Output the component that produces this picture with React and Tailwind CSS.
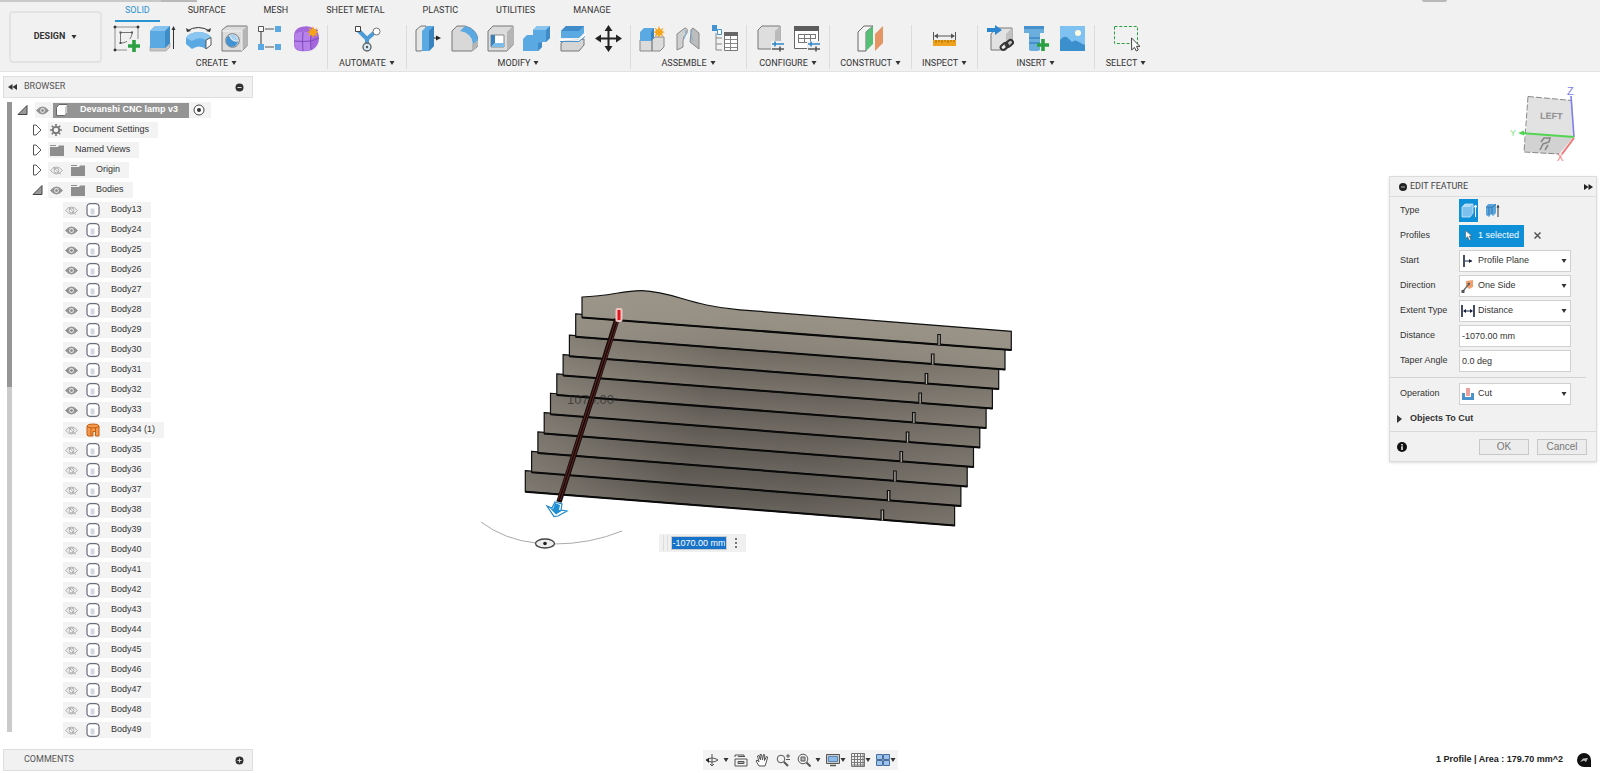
import { useState } from "react";

const tabs = ["SOLID", "SURFACE", "MESH", "SHEET METAL", "PLASTIC", "UTILITIES", "MANAGE"];

const Svg = ({ children, size = "h-[27px] w-[27px]" }) => (
  <svg viewBox="0 0 27 27" className={`${size} shrink-0`} fill="none">
    {children}
  </svg>
);

const Star = ({ x, y }) => (
  <g transform={`translate(${x} ${y})`} fill="#f5a31a">
    <path d="M0-6 1.4-2.2 4.4-4.4 3-1 6 0 3 1.2 4.4 4.4 1.2 3 0 6-1.2 3-4.4 4.4-3 1.2-6 0-3-1-4.4-4.4-1.4-2.2Z" />
  </g>
);

const Plus = ({ x, y }) => (
  <path d={`M${x} ${y - 6}v12M${x - 6} ${y}h12`} stroke="#2ba043" strokeWidth="3.6" />
);

const SketchIcon = () => (
  <Svg>
    <path d="M2 2h23v23H2Z" stroke="#777" strokeWidth=".8" />
    <path d="M1 1h2v2H1zM24 1h2v2h-2zM1 24h2v2H1z" fill="#333" stroke="#333" strokeWidth=".6" />
    <path d="M7.500 7.500H19C19 13 15 18 7.500 18Z" stroke="#666" strokeWidth=".9" />
    <path d="M6.500 6.500h2v2h-2zM18 6.500h2v2h-2zM6.500 17h2v2h-2z" fill="#555" />
    <path d="M14 14h13v13H14z" fill="#f0f0f0" />
    <Plus x={21} y={21} />
  </Svg>
);

const ExtrudeIcon = () => (
  <Svg>
    <path d="M1 21 5 18h16v4l-4 4H1z" fill="#c5c5c5" stroke="#999" strokeWidth=".6" />
    <path d="M1 6 6 1h15v17l-5 5H1Z" fill="#5ba9e2" />
    <path d="M1 6 6 1h15l-5 5Z" fill="#86c3ee" />
    <path d="M16 6 21 1v17l-5 5Z" fill="#3f8cc9" />
    <path d="M24.500 24V3" stroke="#333" />
    <path d="m22.500 5 2-4 2 4z" fill="#333" />
  </Svg>
);

const RevolveIcon = () => (
  <Svg>
    <path d="M2 6Q13-1 25 6" stroke="#333" />
    <path d="m1 3 1 4 4-1zM26 3l-1 4-4-1z" fill="#333" />
    <path d="M1 13Q3 8 13 7q9 0 13 5v8l-5 4q-7-5-14 0l-6-5Z" fill="#5ba9e2" />
    <path d="M1 13Q3 8 13 7q9 0 13 5l-5 3q-7-4-14 1Z" fill="#8ac6f0" />
    <path d="m21 15 5-2.500V20l-5 4Z" fill="#fff" stroke="#555" />
  </Svg>
);

const HoleIcon = () => (
  <Svg>
    <path d="M1 5 6 1h20v20l-5 5H1Z" fill="#dcdcdc" stroke="#777" />
    <path d="M21 6 26 1v20l-5 5Z" fill="#b5b5b5" />
    <path d="M1 6h20v20" stroke="#f3f3f3" />
    <circle cx="11.500" cy="15.500" r="6.800" fill="#e9e9e9" stroke="#777" />
    <path d="M8 10.500a6 6 0 1 0 9 6q-7 1-9-6Z" fill="#4393d3" />
    <path d="M9 10q2 6 8 5.500a6 6 0 0 0-8-5.500Z" fill="#a5d2f2" />
  </Svg>
);

const PatternIcon = () => (
  <Svg>
    <path d="M4 7v12M8 4h9M8 22h9" stroke="#555" strokeWidth="1.200" />
    <path d="M1.500 1.500h5v5h-5z" fill="#fff" stroke="#555" />
    <path d="M18 1h6v6h-6zM1 19h6v6H1zM18 19h6v6h-6z" fill="#5ba9e2" />
  </Svg>
);

const FormIcon = () => (
  <Svg>
    <path d="M1 11Q1 4 8 2q7-2 12 1 6 3 6 10 0 8-7 12-6 2-12 1-6-1-6-7Z" fill="#a468dc" />
    <path d="M2 9Q8 5 18 8q-1 9 0 17-10 2-15-2Q0 18 2 9Z" fill="#b681ea" />
    <path d="M10 7q-1 10 0 19M1 16q9 1 17 0l8-3M18 8l7-3M18 8q-1 9 0 17" stroke="#7b42b8" strokeWidth=".9" />
    <Star x={20} y={7} />
  </Svg>
);

const AutomateIcon = () => (
  <Svg>
    <path d="m4 5 9 9 8-7M13 13v8" stroke="#4c9bd6" strokeWidth="4" />
    <path d="M1.500 1.500h5v5h-5z" fill="#fff" stroke="#444" />
    <circle cx="22.500" cy="6.500" r="3.500" fill="#fff" stroke="#777" />
    <circle cx="13" cy="22" r="4" fill="#d5e8f6" stroke="#666" strokeWidth="1.400" />
    <circle cx="13" cy="22" r="1.200" fill="#555" />
  </Svg>
);

const PressPullIcon = () => (
  <Svg>
    <path d="M1 5 6 1h5v21l-5 4H1Z" fill="#e6e6e6" stroke="#777" />
    <path d="M7 6 12 1h7v20l-5 5H7Z" fill="#5ba9e2" />
    <path d="m14 6 5-5v20l-5 5Z" fill="#3782bf" />
    <path d="M19 13h4" stroke="#222" />
    <path d="m21 10.500 5 2.500-5 2.500z" fill="#222" />
  </Svg>
);

const FilletIcon = () => (
  <Svg>
    <path d="M1 6 6 1h8q12 3 13 14v6l-6 5H1Z" fill="#d8d8d8" stroke="#777" />
    <path d="m21 19 6-4v6l-6 5Z" fill="#b5b5b5" />
    <path d="m9 6 5-5q12 3 13 14l-5 4Q21 8 9 6Z" fill="#5ba9e2" />
  </Svg>
);

const ShellIcon = () => (
  <Svg>
    <path d="M1 6 6 1h20v19l-6 6H1Z" fill="#dcdcdc" stroke="#777" />
    <path d="m20 7 6-6v19l-6 6Z" fill="#b5b5b5" />
    <path d="M4 10h13v12H4Z" fill="#fff" stroke="#888" />
    <path d="M4 10v12l4-4v-8Z" fill="#3782bf" />
    <path d="m4 22 4-4h9v4Z" fill="#7bbdea" />
  </Svg>
);

const CombineIcon = () => (
  <Svg>
    <path d="m10 5 4-4h13v12l-4 4h-4v5l-4 4H0V14l4-4h6Z" fill="#5ba9e2" />
    <path d="m10 5 4-4h13l-4 4Z" fill="#89c5ef" />
    <path d="m23 5 4-4v12l-4 4ZM15 18l4-1v5l-4 4Z" fill="#3f8cc9" />
  </Svg>
);

const SplitIcon = () => (
  <Svg>
    <path d="m2 18 3-2 20-2v6l-5 6H2Z" fill="#d5d5d5" stroke="#777" />
    <path d="M2 6 7 1h18v7l-5 5H2Z" fill="#5ba9e2" />
    <path d="m2 6 5-5h18l-5 5Z" fill="#3f8cc9" />
    <path d="M0 15h20l7-6" stroke="#fff" strokeWidth="1.600" />
    <path d="M1 16.500h19l6-5" stroke="#4393d3" />
  </Svg>
);

const MoveIcon = () => (
  <Svg>
    <path d="M13.500 4v19M4 13.500h19" stroke="#222" strokeWidth="2" />
    <path d="m13.500 0 4 6h-8zM13.500 27l4-6h-8zM0 13.500l6-4v8zM27 13.500l-6-4v8z" fill="#222" />
  </Svg>
);

const NewComponentIcon = () => (
  <Svg>
    <path d="M1 15h12v11H1zM13 15l3-3h9v10l-4 4h-8z" fill="#dcdcdc" stroke="#888" />
    <path d="M1 7 5 3h10v9l-3 4H1Z" fill="#5ba9e2" />
    <path d="m12 7 3-4v9l-3 4Z" fill="#3782bf" />
    <Star x={20} y={7} />
  </Svg>
);

const JointIcon = () => (
  <Svg>
    <path d="M2 9 10 3q3 0 2 5-4 3-4 8v6l-6 3Z" fill="#d0d0d0" stroke="#888" />
    <path d="M24 8 18 3q-3 1-2 5l-1 9 9 7Z" fill="#bdbdbd" stroke="#888" />
    <path d="m10 5 1 4-2 5M17 5l-1 5 2 6" stroke="#7fb2d9" />
  </Svg>
);

const BomIcon = () => (
  <Svg>
    <path d="M5 8v17M5 13h6M5 19h6M5 25h6" stroke="#888" />
    <path d="M1 0h5v6H1z" fill="#4393d3" />
    <path d="M6.500 4.500h4v5h-4z" fill="#fff" stroke="#4393d3" />
    <path d="M13.500 7.500h13v18h-13z" fill="#fff" stroke="#777" />
    <path d="M13 7h14v4H13z" fill="#666" />
    <path d="M14 14.500h12M14 18.500h12M14 22.500h12M19.500 11v14" stroke="#888" />
  </Svg>
);

const Sliders = () => (
  <g>
    <path d="M14 16h13v11H14z" fill="#f0f0f0" />
    <path d="M15 19h12M18 16.500v5" stroke="#2f86c9" strokeWidth="1.600" />
    <path d="M15 24h12M23 21.500v5" stroke="#555" strokeWidth="1.600" />
  </g>
);

const ConfigureIcon = () => (
  <Svg>
    <path d="M1 5 5 1h18v18l-5 5H1Z" fill="#dedede" stroke="#777" />
    <path d="m18 6 5-5v18l-5 5Z" fill="#bbb" />
    <Sliders />
  </Svg>
);

const ConfigTableIcon = () => (
  <Svg>
    <path d="M1.500 2.500h24v21h-24z" fill="#fff" stroke="#666" />
    <path d="M1 1h25v5H1z" fill="#5c5c5c" />
    <path d="M5 9.500h17M5 13.500h17M5 17.500h12M5.500 9v9M11.500 9v9M17.500 9v9M22.500 9v5" stroke="#777" />
    <Sliders />
  </Svg>
);

const PlaneIcon = () => (
  <Svg>
    <path d="M1 7 7 1h9L9 7v19H1Z" fill="#f4f4f4" stroke="#666" />
    <path d="m9 7 7-6v18l-7 7Z" fill="#56be76" />
    <path d="m18 9 8-8v17l-8 8Z" fill="#e59564" />
  </Svg>
);

const MeasureIcon = () => (
  <Svg>
    <path d="M2.500 7v8M24.500 7v8M4 11h19" stroke="#555" />
    <path d="m3 11 4-2.500v5zM24 11l-4-2.500v5z" fill="#555" />
    <path d="M2 15h23v6H2z" fill="#f0a21c" />
    <path d="M5 15v3M8 15v2M11 15v3M14 15v2M17 15v3M20 15v2M23 15v2" stroke="#8a5a00" strokeWidth=".8" />
  </Svg>
);

const InsertLinkIcon = () => (
  <Svg>
    <path d="M4 9 9 3h16v16l-6 6H4Z" fill="#e2e2e2" stroke="#777" />
    <path d="m19 9 6-6v16l-6 6Z" fill="#c0c0c0" />
    <path d="M0 3h8V0l7 5-7 5V7H0Z" fill="#2b86d1" />
    <g stroke="#333" strokeWidth="2">
      <rect x="13" y="19" width="8" height="5" rx="2.500" transform="rotate(-40 17 21)" fill="#eee" />
      <rect x="18" y="16" width="8" height="5" rx="2.500" transform="rotate(-40 22 18)" />
    </g>
  </Svg>
);

const BoltIcon = () => (
  <Svg>
    <path d="M1 1h20v7h-4v17l-2 1H8l-2-1V8H1Z" fill="#6aaede" />
    <path d="M1 1h20v3H1zM6 12h11v2H6zM6 17h11v2H6z" fill="#4690cb" />
    <Plus x={20} y={20} />
  </Svg>
);

const ImageIcon = () => (
  <Svg>
    <path d="M1 1h25v25H1z" fill="#7fc2f2" />
    <path d="M1 15q5-6 9-1l3 3q3-3 7 0 3 2 6 3v6H1Z" fill="#3b8fcd" />
    <circle cx="19" cy="8" r="3" fill="#fffbe0" />
  </Svg>
);

const SelectIcon = () => (
  <Svg>
    <path d="M1.500 1.500h23v17h-23z" stroke="#2ba043" strokeDasharray="3 1.800" />
    <path d="m18.500 13 .2 12 2.800-2.600 1.800 3.600 2-1-1.800-3.600h3.500Z" fill="#fff" stroke="#444" />
  </Svg>
);

const groups = [
  { label: "CREATE", width: "w-[222px]", icons: [SketchIcon, ExtrudeIcon, RevolveIcon, HoleIcon, PatternIcon, FormIcon] },
  { label: "AUTOMATE", width: "w-[79px]", icons: [AutomateIcon] },
  { label: "MODIFY", width: "w-[224px]", icons: [PressPullIcon, FilletIcon, ShellIcon, CombineIcon, SplitIcon, MoveIcon] },
  { label: "ASSEMBLE", width: "w-[116px]", icons: [NewComponentIcon, JointIcon, BomIcon] },
  { label: "CONFIGURE", width: "w-[83px]", icons: [ConfigureIcon, ConfigTableIcon] },
  { label: "CONSTRUCT", width: "w-[82px]", icons: [PlaneIcon] },
  { label: "INSPECT", width: "w-[66px]", icons: [MeasureIcon] },
  { label: "INSERT", width: "w-[117px]", icons: [InsertLinkIcon, BoltIcon, ImageIcon] },
  { label: "SELECT", width: "w-[62px]", icons: [SelectIcon] },
];

const Caret = () => (
  <svg viewBox="0 0 6 4" className="h-1 w-[6px] shrink-0" fill="#333">
    <path d="M.5 0h5L3 4z" />
  </svg>
);

const Toolbar = () => {
  const [active, setActive] = useState("SOLID");

  return (
    <header className="flex h-[72px] shrink-0 flex-col border-b border-[#e2e2e2] bg-[#f1f1f1] font-['Roboto',sans-serif] text-[9px] text-[#333]">
      <div className="flex h-[2px] justify-between">
        <div className="flex w-[197px] bg-[#c9c9c9]">
          <span className="ml-auto w-9 bg-[#b9b9b9]" />
        </div>
        <span className="mr-[153px] w-[25px] rounded-b bg-[#b9b9b9]" />
      </div>
      <div className="flex flex-1">
        <button className="mt-[9px] ml-[9px] flex h-[52px] w-[93px] shrink-0 items-center justify-center gap-[6px] rounded border-2 border-[#e3e3e3] font-bold">
          DESIGN <Caret />
        </button>
        <div className="flex min-w-0 flex-1 flex-col">
          <nav className="ml-[13px] flex h-5 gap-[18px]">
            {tabs.map((tab) => (
              <button
                key={tab}
                onClick={() => setActive(tab)}
                className={`shrink-0 border-b-2 px-[10px] whitespace-nowrap ${tab === active ? "border-[#2a93d1] text-[#2a93d1]" : "border-transparent"}`}
              >
                {tab}
              </button>
            ))}
          </nav>
          <div className="ml-1 flex divide-x divide-[#dcdcdc] pt-[3px]">
            {groups.map((group) => (
              <div key={group.label} className={`flex h-11 shrink-0 flex-col items-center justify-between ${group.width}`}>
                <div className="flex gap-[9px]">
                  {group.icons.map((Icon, i) => (
                    <button key={i} aria-label={`${group.label} tool ${i + 1}`}>
                      <Icon />
                    </button>
                  ))}
                </div>
                <button className="flex items-center gap-[3px] leading-3">
                  {group.label} <Caret />
                </button>
              </div>
            ))}
          </div>
        </div>
      </div>
    </header>
  );
};

const Eye = ({ on }) => (
  <svg viewBox="0 0 13 9" className="h-[9px] w-[13px]" fill="none">
    {on ? (
      <>
        <path d="M.5 4.500Q6.500-2.500 12.500 4.500 6.500 11.500.5 4.500Z" fill="#929292" stroke="#929292" />
        <circle cx="6.500" cy="4.500" r="2.400" fill="#e5e5e5" />
        <circle cx="6.500" cy="4.500" r="1.300" fill="#808080" />
      </>
    ) : (
      <>
        <path d="M.5 4.500Q6.500-2.500 12.500 4.500 6.500 11.500.5 4.500Z" stroke="#b0b0b0" />
        <circle cx="6.500" cy="4.500" r="2.400" stroke="#b0b0b0" />
        <path d="m3 1 8 7.500" stroke="#b0b0b0" />
      </>
    )}
  </svg>
);

const BodyIcon = () => (
  <svg viewBox="0 0 14 14" className="h-[14px] w-[14px]" fill="none">
    <path d="M1 3.500Q1 .7 4 .7h6q3 0 3 2.800V11q0 2.300-3 2.300H4Q1 13.300 1 11Z" fill="#fff" stroke="#4a4f60" />
    <path d="M4.500 5.500h4v6h-4z" fill="#d3d7e2" />
  </svg>
);

const OrangeBodyIcon = () => (
  <svg viewBox="0 0 14 14" className="h-[14px] w-[14px]" fill="none">
    <path d="M1 3q0-2 6-2t6 2v10H9.500V8.500H7V13H2L1 12Z" fill="#f39a4e" stroke="#c65f12" />
    <path d="M1 4q6 2 12 0M5 5v8M9.500 5v4" stroke="#c65f12" />
  </svg>
);

const Folder = () => (
  <svg viewBox="0 0 14 11" className="h-[11px] w-[14px]" fill="#8e8e8e">
    <path d="M0 2h8l1-1.500h5V11H0z" />
    <path d="M0 0h6v1H0z" />
  </svg>
);

const Gear = () => (
  <svg viewBox="0 0 12 12" className="h-3 w-3" fill="none" stroke="#777">
    <circle cx="6" cy="6" r="3.200" strokeWidth="1.800" />
    <path d="M6 0v2M6 10v2M0 6h2M10 6h2M1.800 1.800l1.400 1.400M8.800 8.800l1.400 1.400M1.800 10.200l1.400-1.400M8.800 3.200l1.400-1.400" strokeWidth="1.600" />
  </svg>
);

const Twisty = ({ open }) => (
  <svg viewBox="0 0 11 12" className="h-3 w-[11px] shrink-0">
    {open ? <path d="M1 10.500h9v-9z" fill="#999" stroke="#444" /> : <path d="M1.500 1v10H4l5-5-5-5Z" fill="#fff" stroke="#555" />}
  </svg>
);

const bodies = [13, ...Array.from({ length: 26 }, (_, i) => i + 24)].map((n) => ({
  name: n === 34 ? "Body34 (1)" : `Body${n}`,
  on: n >= 24 && n <= 33,
  orange: n === 34,
}));

const folders = [
  { name: "Document Settings", icon: Gear },
  { name: "Named Views", icon: Folder },
  { name: "Origin", icon: Folder, eye: true, on: false },
  { name: "Bodies", icon: Folder, eye: true, on: true, open: true },
];

const PanelBar = ({ title, back, sign }) => (
  <div className="flex h-[22px] items-center border border-[#dedede] bg-[#f1f1f1] pr-2 pl-1 font-['Roboto',sans-serif] text-[9px] text-[#555]">
    <span className="flex w-4">
      {back && (
        <svg viewBox="0 0 9 6" className="h-[6px] w-[9px]" fill="#333">
          <path d="M4.500 0v6L0 3zM9 0v6L4.500 3z" />
        </svg>
      )}
    </span>
    <span>{title}</span>
    <button aria-label={`Toggle ${title}`} className="ml-auto">
      <svg viewBox="0 0 9 9" className="h-[9px] w-[9px]">
        <circle cx="4.500" cy="4.500" r="4" fill="#333" />
        <path d={sign} stroke="#ddd" />
      </svg>
    </button>
  </div>
);

const Browser = () => (
  <aside className="ml-[3px] flex w-[250px] shrink-0 flex-col pt-1">
    <PanelBar title="BROWSER" back sign="M2.500 4.500h4" />
    <div className="mt-[2px] flex flex-1 pl-1">
      <div className="mt-[2px] h-[630px] w-[5px] bg-[#cbcbcb]">
        <div className="h-[285px] bg-[#959595]" />
      </div>
      <ul className="min-w-0 text-[9px] text-[#333]">
        <li className="flex h-5 items-center pl-[5px]">
          <Twisty open />
          <div className="ml-[7px] flex h-4 items-center bg-[#f3f3f3] pr-[6px]">
            <span className="flex w-[18px] pl-px">
              <Eye on />
            </span>
            <span className="flex h-[15px] items-center gap-3 bg-[#949494] pr-[11px] pl-[3px] font-bold text-white">
              <svg viewBox="0 0 12 12" className="h-3 w-3">
                <path d="M.5 3.500 3 .5h8.500v8l-3 3h-8Z" fill="#fff" stroke="#666" />
                <path d="m9 3 2.500-2.500v8L9 11Z" fill="#ccc" />
              </svg>
              Devanshi CNC lamp v3
            </span>
            <svg viewBox="0 0 12 12" className="ml-1 h-3 w-3">
              <circle cx="6" cy="6" r="5" fill="#fff" stroke="#444" />
              <circle cx="6" cy="6" r="2" fill="#333" />
            </svg>
          </div>
        </li>
        {folders.map((item) => (
          <li key={item.name} className="flex h-5 items-center pl-5">
            <Twisty open={item.open} />
            <div className="ml-[5px] flex h-4 items-center bg-[#f3f3f3] pr-[9px] pl-[2px]">
              {item.eye && (
                <span className="flex w-[21px]">
                  <Eye on={item.on} />
                </span>
              )}
              <item.icon />
              <span className="ml-[11px] whitespace-nowrap">{item.name}</span>
            </div>
          </li>
        ))}
        {bodies.map((body) => (
          <li key={body.name} className="flex h-5 items-center pl-[51px]">
            <div className="flex h-4 items-center bg-[#f3f3f3] pr-[9px] pl-[2px]">
              <Eye on={body.on} />
              <span className="ml-2 flex">{body.orange ? <OrangeBodyIcon /> : <BodyIcon />}</span>
              <span className="ml-[11px] whitespace-nowrap">{body.name}</span>
            </div>
          </li>
        ))}
      </ul>
    </div>
  </aside>
);

// front slab first, each next one is shifted left and down
const slabs = Array.from({ length: 10 }, (_, i) => ({
  l: 582 - 6.3 * i,
  r: 1011.3 - 6.3 * i,
  bl: 317.5 + 19.35 * i,
  br: 350 + 19.5 * i,
  i,
}));

// shade at the upper and lower edge of each slab
const shades = [
  ["#989185", "#958e83"],
  ["#8f887d", "#89837a"],
  ["#6d675f", "#7d766d"],
  ["#67625b", "#79736a"],
  ["#615c56", "#746e66"],
  ["#5e5a54", "#706a62"],
  ["#5b5751", "#6c665f"],
  ["#59554f", "#69645d"],
  ["#58544e", "#67625b"],
  ["#57534d", "#66615a"],
];

const slabPath = ({ l, r, bl, br, i }) =>
  i === 0
    ? "M582 297C612 296 622 290.500 642 290.700 675 292 690 306 740 309.800L1011.300 331.300V350L582 317.500Z"
    : `M${l} ${bl - (i === 1 ? 23 : 21)}L${r} ${br - 21}V${br}L${l} ${bl}Z`;

const Model = () => (
  <svg viewBox="470 280 560 280" className="h-[280px] w-[560px]" fill="none">
    <defs>
      {slabs.map(({ l, bl, i }) => (
        <linearGradient key={i} id={`slab${i}`} gradientUnits="userSpaceOnUse" x1={l} y1={bl - 21} x2={l - 1.6} y2={bl}>
          <stop offset="0" stopColor={shades[i][0]} />
          <stop offset="1" stopColor={shades[i][1]} />
        </linearGradient>
      ))}
      <linearGradient id="sheen" x1="0" y1="0" x2="1" y2="0">
        <stop offset="0" stopColor="#a09a8e" stopOpacity=".45" />
        <stop offset=".35" stopColor="#a09a8e" stopOpacity="0" />
        <stop offset=".65" stopColor="#a09a8e" stopOpacity=".05" />
        <stop offset="1" stopColor="#a09a8e" stopOpacity=".35" />
      </linearGradient>
    </defs>
    {[...slabs].reverse().map((slab) => (
      <g key={slab.i}>
        <path d={slabPath(slab)} fill={`url(#slab${slab.i})`} />
        <path d={slabPath(slab)} fill="url(#sheen)" stroke="#111" strokeWidth="1.200" />
        <path d={`M${slab.l} ${slab.bl}L${slab.r} ${slab.br}`} stroke="#0a0a0a" strokeWidth="2" />
        <path d={`M${slab.r - 73.5} ${slab.br - 5}v-10.500h2.500v10.500`} fill="#b5b0a4" stroke="#111" strokeWidth="1.200" />
      </g>
    ))}
    <text x="567" y="404" fontSize="13" fill="#222" opacity=".6" fontFamily="Liberation Sans, sans-serif">
      1070.00
    </text>
    <path d="M617 319 559 502" stroke="#170b0a" strokeWidth="5.500" />
    <path d="M616 320 558 500M618.500 320 560.500 500" stroke="#6e2c28" strokeWidth=".8" />
    <rect x="615.500" y="308" width="7" height="14" rx="2" fill="#e9c4c0" />
    <path d="M619 310v10" stroke="#e2141c" strokeWidth="3" />
    <path d="m547 506 5 2 3-6 7 2-1 6 6 1-9 5-4 .5Z" fill="#fff" stroke="#1f86c8" strokeWidth="1.200" />
    <path d="m549 507 4 2 2-6 5 2-1 5h4l-7 4.500Z" fill="#1e8fd5" />
    <path d="M481 522Q505 540 536 543M554 544Q590 544 622 531" stroke="#aaa" />
    <ellipse cx="545" cy="543.500" rx="9.500" ry="4.500" fill="#eee" stroke="#444" strokeWidth="1.300" />
    <circle cx="545" cy="543.500" r="1.800" fill="#222" />
  </svg>
);

const ViewCube = () => (
  <svg viewBox="0 0 80 90" className="mr-[7px] h-[90px] w-20" fill="none" fontFamily="Liberation Sans, sans-serif">
    <path d="m18 17.500 44 4 2 36-15 18-34-2.500 1-17Z" fill="#e2e2e2" />
    <path d="m16 55 48 2-15 18-35-2.500Z" fill="#d2d2d2" />
    <path d="m18 17.500 44 4M18 17.500 14 73l35 2" stroke="#888" strokeDasharray="6 2" />
    <text x="30" y="40" fontSize="9" fontWeight="700" fill="#909090" transform="rotate(2 40 38)">
      LEFT
    </text>
    <path d="m30 71 3-6 6-2 1-4h-6l-3 4M35 71l3-5" stroke="#888" strokeWidth="1.600" />
    <path d="M61 17 64 58" stroke="#8080e8" strokeWidth="1.600" />
    <path d="M11 54 64 58" stroke="#52d552" strokeWidth="2" />
    <path d="m8 54 6-2.500v5z" fill="#52d552" />
    <path d="M64 59 52 75" stroke="#ee7777" strokeWidth="2" />
    <text x="57" y="16" fontSize="11" fill="#7d7de8">Z</text>
    <text x="0" y="57" fontSize="9" fill="#7fe87f">Y</text>
    <text x="47" y="82" fontSize="10" fill="#f07c7c">X</text>
  </svg>
);

const StartIcon = () => (
  <svg viewBox="0 0 14 14" className="h-[14px] w-[14px]" fill="none" stroke="#16213f">
    <path d="M3 1v12" strokeWidth="1.600" />
    <path d="M4 7h7" />
    <path d="M8 5v4l3-2z" fill="#16213f" stroke="none" />
  </svg>
);

const SideIcon = () => (
  <svg viewBox="0 0 14 14" className="h-[14px] w-[14px]" fill="none">
    <path d="m5 2 7-1v7l-4 2-3-3Z" fill="#f0a070" />
    <path d="M2 12 8 5" stroke="#666" strokeWidth="1.200" />
    <path d="m6 4.500 3-1-.5 3zM.5 11h3v3h-3z" fill="#555" />
  </svg>
);

const ExtentIcon = () => (
  <svg viewBox="0 0 14 14" className="h-[14px] w-[14px]" fill="none" stroke="#16213f">
    <path d="M1 1v12M13 1v12" strokeWidth="1.600" />
    <path d="M3 7h8" />
    <path d="M5 5v4L2 7zM9 5v4l3-2z" fill="#16213f" stroke="none" />
  </svg>
);

const CutIcon = () => (
  <svg viewBox="0 0 14 14" className="h-[14px] w-[14px]">
    <path d="M1 6h3v4h6V6h3v7H1Z" fill="#4c93cc" />
    <path d="M5 1h4v8H5z" fill="#eda09c" />
  </svg>
);

const CubeIcon = ({ stroke }) => (
  <svg viewBox="0 0 16 16" className="h-4 w-4" fill="none">
    <path d="m1 4 3-3h8v9l-3 4H1Z" fill="#7cc0ee" stroke="#cfe8f8" strokeWidth=".8" />
    <path d="m1 4 3-3h8L9 4Z" fill="#b4dcf6" />
    <path d="M14.500 14V3M13 4.500 14.500 2 16 4.500" stroke={stroke} />
  </svg>
);

const ThinIcon = () => (
  <svg viewBox="0 0 16 16" className="h-4 w-4" fill="none">
    <path d="m2 4 2-3h8v9l-3 3-2-2-2 3-3-2Z" fill="#5aa5dc" />
    <path d="M5 4v8M8 4v7M2 4h7l3-3" stroke="#2c6fa5" strokeWidth=".8" />
    <path d="M14 14V3" stroke="#333" />
    <path d="m12.500 4.500 1.500-3 1.500 3z" fill="#333" />
  </svg>
);

const fieldClass = "h-[22px] w-[112px] border border-[#d0d0d0] bg-white text-[9px]";

const Row = ({ label, id, children }) => (
  <div className="flex h-[25px] items-center">
    <label htmlFor={id} className="w-[59px] shrink-0">
      {label}
    </label>
    {children}
  </div>
);

const SelectRow = ({ label, id, icon: Icon, value }) => (
  <Row label={label} id={id}>
    <div className="relative">
      <select id={id} className={`${fieldClass} appearance-none pl-[18px]`}>
        <option>{value}</option>
      </select>
      <span className="pointer-events-none absolute inset-y-0 left-[2px] flex items-center">
        <Icon />
      </span>
      <span className="pointer-events-none absolute inset-y-0 right-1 flex items-center">
        <Caret />
      </span>
    </div>
  </Row>
);

const InputRow = ({ label, id, value }) => (
  <Row label={label} id={id}>
    <input id={id} defaultValue={value} className={`${fieldClass} px-[2px]`} />
  </Row>
);

const EditFeature = () => (
  <section className="w-[208px] border border-[#dcdcdc] bg-[#f1f1f1] text-[9px] text-[#333] shadow-sm">
    <div className="flex h-5 items-center border-b border-[#dcdcdc] px-[9px] pr-[3px] font-['Roboto',sans-serif] text-[#444]">
      <svg viewBox="0 0 8 8" className="mr-[3px] h-2 w-2">
        <circle cx="4" cy="4" r="4" fill="#222" />
        <path d="M2 4h4" stroke="#bbb" />
      </svg>
      EDIT FEATURE
      <svg viewBox="0 0 9 6" className="ml-auto h-[6px] w-[9px]" fill="#222">
        <path d="M0 0v6l4.500-3zM4.500 0v6L9 3z" />
      </svg>
    </div>
    <div className="pt-px pl-[10px]">
      <Row label="Type">
        <button aria-label="Solid" className="grid h-[23px] w-[19px] place-items-center bg-[#0e90d8]">
          <CubeIcon stroke="#fff" />
        </button>
        <button aria-label="Thin" className="ml-[6px]">
          <ThinIcon />
        </button>
      </Row>
      <Row label="Profiles">
        <button className="flex h-[22px] w-[65px] items-center gap-[5px] bg-[#0e90d8] pl-[6px] whitespace-nowrap text-white">
          <svg viewBox="0 0 8 11" className="h-[11px] w-2" fill="#fff" stroke="#555" strokeWidth=".6">
            <path d="m.5.5.2 8 2-1.800 1.500 3.600 1.600-.8L4.300 6H7Z" />
          </svg>
          1 selected
        </button>
        <button aria-label="Clear profiles" className="ml-[10px]">
          <svg viewBox="0 0 7 7" className="h-[7px] w-[7px]" stroke="#555" strokeWidth="1.500">
            <path d="m.5.5 6 6M6.500.5l-6 6" />
          </svg>
        </button>
      </Row>
      <SelectRow label="Start" id="start" icon={StartIcon} value="Profile Plane" />
      <SelectRow label="Direction" id="direction" icon={SideIcon} value="One Side" />
      <SelectRow label="Extent Type" id="extent" icon={ExtentIcon} value="Distance" />
      <InputRow label="Distance" id="distance" value="-1070.00 mm" />
      <InputRow label="Taper Angle" id="taper" value="0.0 deg" />
    </div>
    <hr className="mt-1 mr-[10px] mb-[3px] border-[#d2d2d2]" />
    <div className="pl-[10px]">
      <SelectRow label="Operation" id="operation" icon={CutIcon} value="Cut" />
    </div>
    <button className="flex h-[25px] items-center gap-2 pl-[7px] font-bold">
      <svg viewBox="0 0 5 8" className="h-2 w-[5px]" fill="#333">
        <path d="M0 0v8l5-4z" />
      </svg>
      Objects To Cut
    </button>
    <div className="flex h-[30px] items-center border-t border-[#d8d8d8] px-[7px] pr-[9px] text-[11px] text-[#777]">
      <svg viewBox="0 0 10 10" className="mr-auto h-[10px] w-[10px]">
        <circle cx="5" cy="5" r="5" fill="#111" />
        <path d="M5 2v1.400M5 4.300V8" stroke="#fff" strokeWidth="1.500" />
      </svg>
      <button className="h-4 w-[50px] border border-[#c8c8c8] bg-[#ececec] text-[10px] leading-3">OK</button>
      <button className="ml-2 h-4 w-[50px] border border-[#c8c8c8] bg-[#ececec] text-[10px] leading-3">Cancel</button>
    </div>
  </section>
);

const NavIcon = ({ children }) => (
  <svg viewBox="0 0 14 14" className="h-[14px] w-[14px]" fill="none" stroke="#555">
    {children}
  </svg>
);

const NavBar = () => (
  <nav className="flex h-5 items-center gap-[5px] bg-[#f3f3f3] px-[2px]">
    <button aria-label="Orbit" className="flex items-center gap-1">
      <NavIcon>
        <path d="M7 1v12M5 11l2 2 2-2M1 7q6-4 12 0-6 4-12 0" />
        <path d="m1 7 3-2v5z" fill="#222" stroke="none" />
      </NavIcon>
      <Caret />
    </button>
    <button aria-label="Look at">
      <NavIcon>
        <path d="M1 6h12v7H1zM1 4V2h9v2M4 3.500h7" />
        <path d="M4 8.500h6v2H4z" fill="#aaa" />
      </NavIcon>
    </button>
    <button aria-label="Pan" className="ml-[2px]">
      <NavIcon>
        <path d="M4 13 1 8l1-1 2 2-1.500-6L4 2.500 5.500 7 5 1.500h1.500L7.500 7 8.500 1.500l1.200.3L9.500 7.500l2-4 1.200.5L11 10l-1 3Z" fill="#fff" />
      </NavIcon>
    </button>
    <button aria-label="Zoom" className="ml-[2px]">
      <NavIcon>
        <circle cx="5" cy="6" r="3.800" />
        <path d="m8 9 4 4" strokeWidth="2" />
        <path d="M10 3h4M12 1v4M10 6.500h4" />
      </NavIcon>
    </button>
    <button aria-label="Fit" className="ml-[2px] flex items-center gap-1">
      <NavIcon>
        <circle cx="6" cy="6" r="4.800" />
        <path d="m9.500 9.500 4 4" strokeWidth="2" />
        <path d="M4 4h4v4H4z" fill="#bbb" />
      </NavIcon>
      <Caret />
    </button>
    <button aria-label="Display" className="flex items-center">
      <NavIcon>
        <path d="M.5 1.500h13v9H.5z" fill="#ccc" />
        <path d="M2.500 3.500h9v5h-9z" fill="#8db9e6" stroke="#5a86b5" />
        <path d="M4 12.500h6" strokeWidth="1.500" />
      </NavIcon>
      <Caret />
    </button>
    <button aria-label="Grid" className="flex items-center">
      <NavIcon>
        <path d="M.5.500h13v13H.5zM3.500 0v14M6.500 0v14M9.500 0v14M0 3.500h14M0 6.500h14M0 9.500h14M12 0v14M0 12h14" stroke="#777" />
      </NavIcon>
      <Caret />
    </button>
    <button aria-label="Viewports" className="flex items-center">
      <NavIcon>
        <path d="M.5 1.500h6v5h-6zM7.500 1.500h6v5h-6zM.5 7.500h6v5h-6zM7.500 7.500h6v5h-6z" fill="#9cc3ea" stroke="#4a6f9e" />
      </NavIcon>
      <Caret />
    </button>
  </nav>
);

export default function App() {
  return (
    <div className="flex min-h-screen flex-col bg-white font-['Liberation_Sans',Arial,sans-serif]">
      <Toolbar />
      <main className="flex flex-1">
        <Browser />
        <div className="flex min-w-0 flex-1 justify-center pt-52 pr-[143px]">
          <figure className="relative h-[280px] w-[560px] shrink-0">
            <Model />
            <div className="absolute top-[254px] left-[189px] flex h-[18px] w-[87px] items-center bg-[#f0f0f0] pl-1">
              <span className="h-4 w-[5px] border-x border-[#ddd]" />
              <input
                aria-label="Distance value"
                defaultValue="-1070.00 mm"
                className="ml-[3px] h-[14px] w-[56px] border border-[#ccc] bg-[#1673c9] px-px text-[9px] text-white"
              />
              <svg viewBox="0 0 3 11" className="ml-2 h-[11px] w-[3px]" fill="#777">
                <path d="M0 0h2v2H0zM0 4h2v2H0zM0 8h2v2H0z" />
              </svg>
            </div>
          </figure>
        </div>
        <div className="mr-[3px] flex shrink-0 flex-col items-end pt-[7px]">
          <ViewCube />
          <div className="pt-[7px]">
            <EditFeature />
          </div>
        </div>
      </main>
      <footer className="grid grid-cols-[1fr_auto_1fr] items-center pb-[2px]">
        <div className="ml-[3px] w-[250px]">
          <PanelBar title="COMMENTS" sign="M2.500 4.500h4M4.500 2.500v4" />
        </div>
        <NavBar />
        <div className="mr-[9px] flex items-center justify-end gap-[14px] text-[9px] font-bold text-[#222]">
          1 Profile | Area : 179.70 mm^2
          <svg viewBox="0 0 14 14" className="h-[14px] w-[14px]">
            <path d="M7 0a7 7 0 0 1 7 7v7H7A7 7 0 0 1 7 0Z" fill="#111" />
            <path d="m3 9 3-3.500 5-.5-2 4-2-1.500Z" fill="#bbb" />
          </svg>
        </div>
      </footer>
    </div>
  );
}
